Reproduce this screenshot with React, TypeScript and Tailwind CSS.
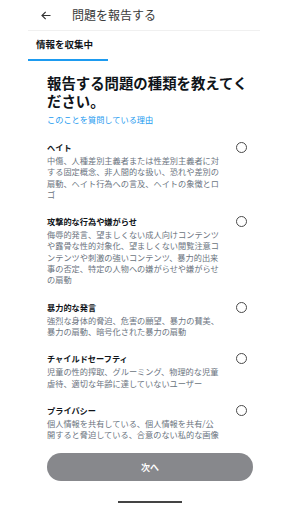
const items = [
  {
    title: "ヘイト",
    lines: [
      "中傷、人種差別主義者または性差別主義者に対",
      "する固定概念、非人間的な扱い、恐れや差別の",
      "扇動、ヘイト行為への言及、ヘイトの象徴とロ",
      "ゴ",
    ],
  },
  {
    title: "攻撃的な行為や嫌がらせ",
    lines: [
      "侮辱的発言、望ましくない成人向けコンテンツ",
      "や露骨な性的対象化、望ましくない閲覧注意コ",
      "ンテンツや刺激の強いコンテンツ、暴力的出来",
      "事の否定、特定の人物への嫌がらせや嫌がらせ",
      "の扇動",
    ],
  },
  {
    title: "暴力的な発言",
    lines: [
      "強烈な身体的脅迫、危害の願望、暴力の賛美、",
      "暴力の扇動、暗号化された暴力の扇動",
    ],
  },
  {
    title: "チャイルドセーフティ",
    lines: [
      "児童の性的搾取、グルーミング、物理的な児童",
      "虐待、適切な年齢に達していないユーザー",
    ],
  },
  {
    title: "プライバシー",
    lines: [
      "個人情報を共有している、個人情報を共有/公",
      "開すると脅迫している、合意のない私的な画像",
    ],
  },
];

const App = () => {
  return (
    <div className="w-[288px] h-[512px] bg-white overflow-hidden font-['Noto_Sans_CJK_JP','Noto_Sans',sans-serif] text-[#0f1419]">
      {/* Top bar */}
      <div className="h-[30px] flex items-center pl-[41px]">
        <svg width="10" height="9" viewBox="0 0 10 9" fill="none" stroke="#333" strokeWidth="1.2">
          <path d="M9.5 4.5H1M4.7 0.8L1 4.5l3.7 3.7" />
        </svg>
        <span className="ml-[21px] text-[12px] leading-[14px] text-[#3a3a3a]">問題を報告する</span>
      </div>
      <div className="mx-[28px] h-px bg-[#f0f0f0]" />

      {/* Tab */}
      <div className="pl-[28px]">
        <div className="w-[80px] flex flex-col">
          <span className="pt-[6px] pl-[8px] text-[9.5px] leading-[14px] font-bold">情報を収集中</span>
          <div className="mt-[8px] h-[2px] bg-[#1d9bf0]" />
        </div>
      </div>

      {/* Content */}
      <div className="pl-[47px] pr-[41px]">
        <h1 className="mt-[13px] text-[14.4px] leading-[17.5px] font-bold whitespace-nowrap">
          報告する問題の種類を教えてく
          <br />
          ださい。
        </h1>
        <p className="mt-[4px] text-[8.2px] leading-[12px] text-[#1d9bf0]">このことを質問している理由</p>

        <div className="mt-[16px] flex flex-col gap-[15px]">
          {items.map((item) => (
            <div key={item.title} className="flex items-start">
              <div className="w-[182px]">
                <div className="text-[8.2px] leading-[13px] font-bold">{item.title}</div>
                <div className="mt-[1px] text-[8.2px] leading-[11.3px] text-[#6b7480] whitespace-nowrap">
                  {item.lines.map((l) => (
                    <div key={l}>{l}</div>
                  ))}
                </div>
              </div>
              <div className="ml-auto mt-[1px] w-[11px] h-[11px] rounded-full border-[1.3px] border-[#4a4a4a]" />
            </div>
          ))}
        </div>
      </div>

      {/* Footer */}
      <button className="mt-[13px] ml-[47px] w-[206px] h-[28px] rounded-full bg-[#87888c] text-white text-[9px] font-bold flex items-center justify-center">
        次へ
      </button>
      <div className="mt-[20px] ml-[118px] w-[64px] h-[2px] bg-[#444]" />
    </div>
  );
};

export default App;
